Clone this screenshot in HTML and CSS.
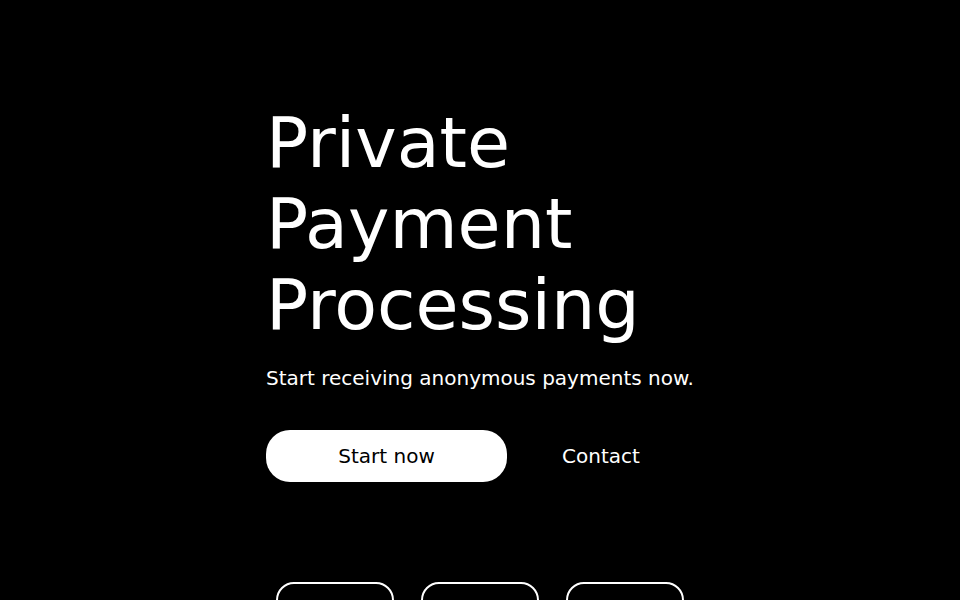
FILE: index.html
```html
<!DOCTYPE html>
<html lang="en">
<head>
<meta charset="utf-8">
<title>Private Payment Processing</title>
<link rel="stylesheet" href="styles.css">
</head>
<body>
<main class="hero">
  <div class="hero-inner">
    <h1 class="title">Private<br>Payment<br>Processing</h1>
    <p class="subtitle">Start receiving anonymous payments now.</p>
    <div class="actions">
      <a class="btn btn-primary" href="#">Start now</a>
      <a class="btn btn-link" href="#">Contact</a>
    </div>
  </div>
  <div class="features">
    <div class="feature"></div>
    <div class="feature"></div>
    <div class="feature"></div>
  </div>
</main>
</body>
</html>
```
FILE: styles.css
```css
html, body {
  margin: 0;
  padding: 0;
  background: #000;
  color: #fff;
  font-family: "DejaVu Sans", "Liberation Sans", sans-serif;
}
.hero {
  display: flex;
  flex-direction: column;
  align-items: center;
  padding-top: 103px;
  overflow: hidden;
  height: 600px;
  box-sizing: border-box;
}
.hero-inner {
  width: 428px;
}
.title {
  margin: 0;
  font-size: 70px;
  line-height: 81px;
  font-weight: normal;
}
.subtitle {
  margin: 17px 0 0;
  font-size: 20px;
  line-height: 30px;
}
.actions {
  display: flex;
  align-items: center;
  margin-top: 37px;
}
.btn {
  display: inline-block;
  font-size: 20px;
  line-height: 24px;
  padding: 14px 32px;
  text-decoration: none;
  border-radius: 24px;
}
.btn-primary {
  background: #fff;
  color: #000;
  width: 241px;
  box-sizing: border-box;
  text-align: center;
  padding: 14px 0;
}
.btn-link {
  color: #fff;
  margin-left: 23px;
}
.features {
  display: flex;
  gap: 27px;
  margin-top: 100px;
}
.feature {
  width: 118px;
  height: 110px;
  box-sizing: border-box;
  border: 2px solid #fff;
  border-radius: 18px;
}
```
